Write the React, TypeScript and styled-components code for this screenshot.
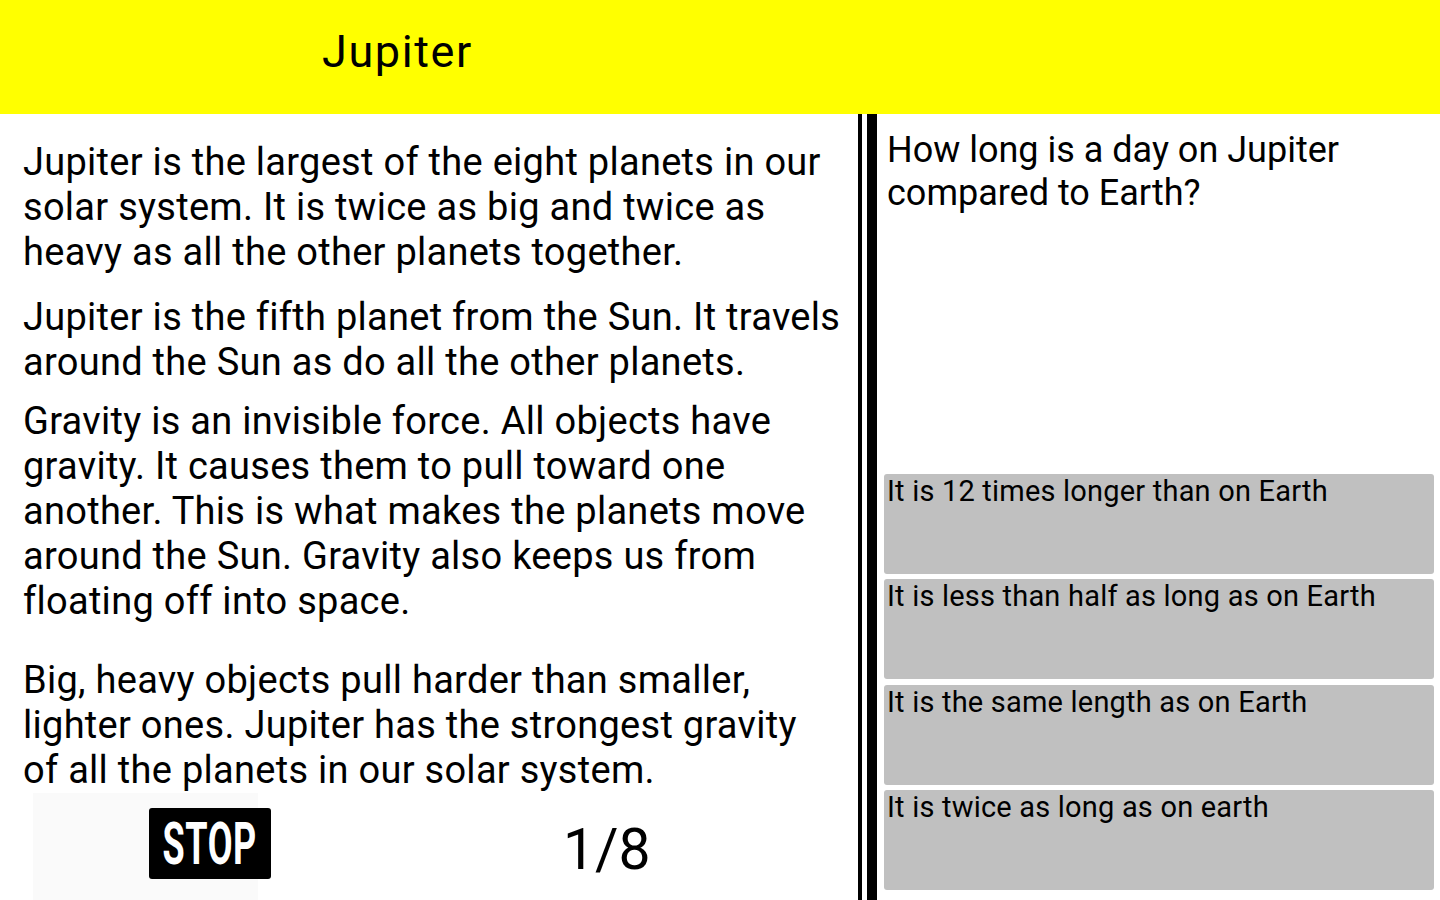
import React from 'react';
import styled, { createGlobalStyle } from 'styled-components';

const GlobalStyle = createGlobalStyle`
  html, body {
    margin: 0;
    padding: 0;
    background: #fff;
    overflow: hidden;
  }
  body {
    font-family: Roboto, "Noto Sans", sans-serif;
    color: #000;
  }
`;

const Screen = styled.div`
  width: 1440px;
  height: 900px;
  display: flex;
  flex-direction: column;
  background: #fff;
`;

const Header = styled.header`
  height: 114px;
  box-sizing: border-box;
  background: #ffff00;
  padding: 25px 0 0 322px;
`;

const Title = styled.h1`
  margin: 0;
  font-size: 45px;
  font-weight: 400;
  line-height: normal;
  letter-spacing: 1.6px;
`;

const Body = styled.div`
  flex: 1;
  display: flex;
  min-height: 0;
`;

const Reading = styled.section`
  width: 858px;
  display: flex;
  flex-direction: column;
`;

const Story = styled.div`
  padding: 26px 0 0 23px;
`;

const Paragraph = styled.p<{ $gap: number }>`
  margin: ${(p) => p.$gap}px 0 0;
  font-size: 38px;
  line-height: 45px;
  letter-spacing: 0.28px;
  white-space: nowrap;
`;

const Footer = styled.div`
  height: 107px;
  display: flex;
  align-items: flex-start;
  padding-left: 33px;
  margin-top: auto;
`;

const StopBox = styled.button`
  width: 225px;
  height: 107px;
  flex-shrink: 0;
  border: none;
  padding: 15px 0 0 116px;
  box-sizing: border-box;
  background: #fafafa;
  display: flex;
  align-items: flex-start;
  cursor: pointer;
`;

const StopSign = styled.div`
  width: 122px;
  height: 71px;
  flex-shrink: 0;
  background: #000;
  border-radius: 3px;
  display: flex;
  align-items: center;
  justify-content: center;
  overflow: hidden;
`;

const StopLabel = styled.span`
  color: #fff;
  font-family: Roboto, "DejaVu Sans", sans-serif;
  font-weight: 700;
  font-size: 60px;
  line-height: 1;
  letter-spacing: 1px;
  transform: scaleX(0.6);
  display: inline-block;
`;

const PageCount = styled.div`
  margin: 23px 0 0 305px;
  font-size: 57px;
  line-height: normal;
`;

const Divider = styled.div`
  width: 5px;
  border-left: 4px solid #000;
  border-right: 10px solid #000;
  flex-shrink: 0;
`;

const Quiz = styled.section`
  flex: 1;
  display: flex;
  flex-direction: column;
  padding: 0 6px 10px 7px;
`;

const Question = styled.div`
  margin: 15px 0 0 3px;
  font-size: 36px;
  line-height: 43px;
  white-space: nowrap;
`;

const Answers = styled.div`
  margin-top: auto;
  display: flex;
  flex-direction: column;
  gap: 5.33px;
`;

const Answer = styled.button`
  height: 100px;
  border: none;
  border-radius: 3px;
  background: #c0c0c0;
  padding: 0 0 0 3px;
  text-align: left;
  display: flex;
  align-items: flex-start;
  font-family: Roboto, sans-serif;
  font-size: 29px;
  line-height: 35px;
  letter-spacing: 0.2px;
  color: #000;
  cursor: pointer;
`;

const paragraphs = [
  {
    gap: 0,
    lines: [
      'Jupiter is the largest of the eight planets in our',
      'solar system. It is twice as big and twice as',
      'heavy as all the other planets together.',
    ],
  },
  {
    gap: 20,
    lines: [
      'Jupiter is the fifth planet from the Sun. It travels',
      'around the Sun as do all the other planets.',
    ],
  },
  {
    gap: 14,
    lines: [
      'Gravity is an invisible force. All objects have',
      'gravity. It causes them to pull toward one',
      'another. This is what makes the planets move',
      'around the Sun. Gravity also keeps us from',
      'floating off into space.',
    ],
  },
  {
    gap: 34,
    lines: [
      'Big, heavy objects pull harder than smaller,',
      'lighter ones. Jupiter has the strongest gravity',
      'of all the planets in our solar system.',
    ],
  },
];

const answers = [
  'It is 12 times longer than on Earth',
  'It is less than half as long as on Earth',
  'It is the same length as on Earth',
  'It is twice as long as on earth',
];

export default function App(): JSX.Element {
  return (
    <Screen>
      <GlobalStyle />
      <Header>
        <Title>Jupiter</Title>
      </Header>
      <Body>
        <Reading>
          <Story>
            {paragraphs.map((para, i) => (
              <Paragraph key={i} $gap={para.gap}>
                {para.lines.map((line, j) => (
                  <React.Fragment key={j}>
                    {line}
                    {j < para.lines.length - 1 && <br />}
                  </React.Fragment>
                ))}
              </Paragraph>
            ))}
          </Story>
          <Footer>
            <StopBox>
              <StopSign>
                <StopLabel>STOP</StopLabel>
              </StopSign>
            </StopBox>
            <PageCount>1/8</PageCount>
          </Footer>
        </Reading>
        <Divider />
        <Quiz>
          <Question>
            How long is a day on Jupiter
            <br />
            compared to Earth?
          </Question>
          <Answers>
            {answers.map((a) => (
              <Answer key={a}>{a}</Answer>
            ))}
          </Answers>
        </Quiz>
      </Body>
    </Screen>
  );
}
